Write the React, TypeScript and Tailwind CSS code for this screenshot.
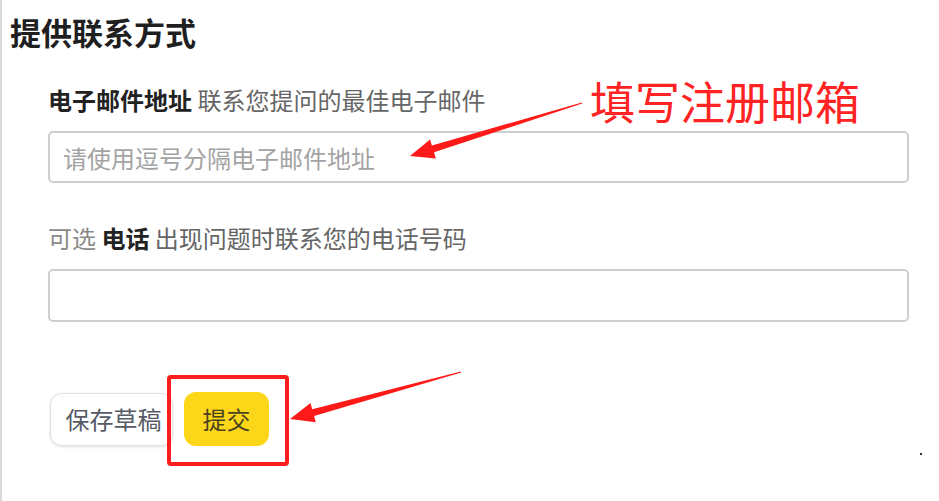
const cjk = { fontFamily: '"Noto Sans CJK SC", "Noto Sans", sans-serif' };

function arrowPoints(tail: [number, number], tip: [number, number], head = 24, headHalf = 10, shaftHalf = 3.5, tailHalf = 0.6) {
  const dx = tail[0] - tip[0];
  const dy = tail[1] - tip[1];
  const len = Math.hypot(dx, dy);
  const ux = dx / len;
  const uy = dy / len;
  const nx = -uy;
  const ny = ux;
  const bx = tip[0] + ux * head;
  const by = tip[1] + uy * head;
  const pts = [
    [tip[0], tip[1]],
    [bx + nx * headHalf, by + ny * headHalf],
    [bx + nx * shaftHalf, by + ny * shaftHalf],
    [tail[0] + nx * tailHalf, tail[1] + ny * tailHalf],
    [tail[0] - nx * tailHalf, tail[1] - ny * tailHalf],
    [bx - nx * shaftHalf, by - ny * shaftHalf],
    [bx - nx * headHalf, by - ny * headHalf],
  ];
  return pts.map((p) => p.map((v) => v.toFixed(1)).join(",")).join(" ");
}

export default function App() {
  return (
    <div className="relative h-[501px] w-[939px] overflow-hidden border-l-2 border-[#d9d9d9] bg-white" style={cjk}>
      <h1 className="pl-[8px] pt-[13px] text-[31px] font-bold leading-[37px] text-[#1f1f1f]">提供联系方式</h1>

      <div className="flex flex-col pl-[46px] pr-[30px] pt-[33px]">
        <label className="text-[24px] leading-[34px] text-[#666]">
          <span className="font-bold text-[#222]">电子邮件地址</span> 联系您提问的最佳电子邮件
        </label>
        <input
          className="mt-[14px] h-[52px] rounded-[5px] border-2 border-[#cfcfcf] px-[13px] text-[24px] text-[#333] placeholder:text-[#a3a3a3] outline-none"
          placeholder="请使用逗号分隔电子邮件地址"
        />

        <label className="mt-[38px] text-[24px] leading-[34px] text-[#666]">
          <span className="text-[#8a8a8a]">可选</span> <span className="font-bold text-[#222]">电话</span> 出现问题时联系您的电话号码
        </label>
        <input className="mt-[14px] h-[53px] rounded-[5px] border-2 border-[#cfcfcf] px-[13px] text-[24px] outline-none" />

        <div className="mt-[70px] flex items-center gap-[11px] pl-[2px]">
          <button className="h-[53px] w-[123px] rounded-[12px] border border-[#e2e2e2] bg-white pl-[4px] text-[24px] text-[#555a66] shadow-[0_1px_3px_rgba(0,0,0,0.12)]">
            保存草稿
          </button>
          <button className="h-[54px] w-[85px] rounded-[12px] bg-[#fcd719] text-[24px] text-[#4a4220]">提交</button>
        </div>
      </div>

      {/* annotation overlay */}
      <div className="absolute left-[165px] top-[375px] h-[91px] w-[122px] rounded-[4px] border-4 border-[#ff1c1c]" />
      <div className="absolute left-[588px] top-[74px] text-[45px] leading-[54px] text-[#ff2323]">填写注册邮箱</div>
      <svg className="absolute left-0 top-0" width="939" height="501" viewBox="0 0 939 501">
        <polygon points={arrowPoints([580, 103], [408, 156])} fill="#ff1a1a" />
        <polygon points={arrowPoints([459, 372], [288, 419])} fill="#ff1a1a" />
        <rect x="918" y="453" width="2" height="2" fill="#333" />
      </svg>
    </div>
  );
}
